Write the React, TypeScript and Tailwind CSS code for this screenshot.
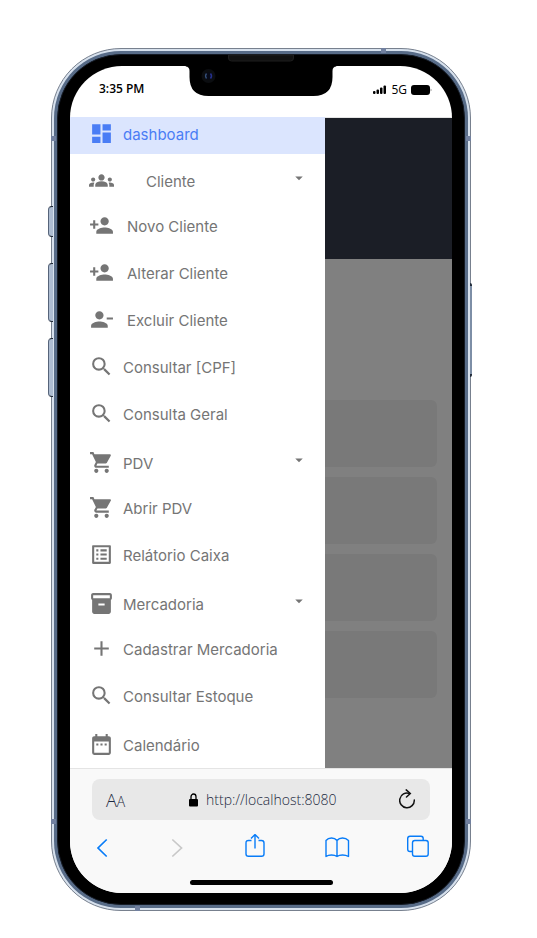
import type { ReactNode } from "react";
import type { IconType } from "react-icons";
import {
  MdAdd,
  MdArrowDropDown,
  MdDashboard,
  MdDateRange,
  MdGroups,
  MdInventory2,
  MdListAlt,
  MdPersonAdd,
  MdPersonRemove,
  MdSearch,
  MdShoppingCart,
} from "react-icons/md";

type Entry = { label: string; icon: IconType; kind?: "group" | "section"; gap?: string };

const entries: Entry[] = [
  { label: "Cliente", icon: MdGroups, kind: "group", gap: "gap-8" },
  { label: "Novo Cliente", icon: MdPersonAdd, gap: "gap-[13px]" },
  { label: "Alterar Cliente", icon: MdPersonAdd, gap: "gap-[13px]" },
  { label: "Excluir Cliente", icon: MdPersonRemove, gap: "gap-[13px]" },
  { label: "Consultar [CPF]", icon: MdSearch },
  { label: "Consulta Geral", icon: MdSearch },
  { label: "PDV", icon: MdShoppingCart, kind: "group" },
  { label: "Abrir PDV", icon: MdShoppingCart },
  { label: "Relátorio Caixa", icon: MdListAlt },
  { label: "Mercadoria", icon: MdInventory2, kind: "group" },
  { label: "Cadastrar Mercadoria", icon: MdAdd },
  { label: "Consultar Estoque", icon: MdSearch },
  { label: "Calendário", icon: MdDateRange, kind: "section" },
];

function MenuRow({ label, icon: Icon, kind, gap = "gap-[9px]" }: Entry) {
  const cls = `flex h-[47px] w-full items-center pl-[19px] text-left ${gap} ${kind ? "pt-1" : ""}`;
  const body = (
    <>
      <Icon className="size-[25px] shrink-0" />
      <span className="flex-1 whitespace-nowrap pt-0.5">{label}</span>
    </>
  );
  if (kind === "group") {
    return (
      <button type="button" className={cls} aria-expanded="true">
        {body}
        <MdArrowDropDown className="mb-1.5 mr-[17px] size-[18px] shrink-0" />
      </button>
    );
  }
  return (
    <a href="#" className={cls}>
      {body}
    </a>
  );
}

function Notch() {
  return (
    <svg
      className="absolute -top-px left-1/2 -translate-x-1/2"
      width="151"
      height="43"
      viewBox="0 0 151 43"
      aria-hidden="true"
    >
      <path
        d="M0 11H151V12.500Q147 12.500 147 17V23Q147 42 128 42H23Q4 42 4 23V17Q4 12.500 0 12.500Z"
        fill="#000"
      />
      <path d="M43 1H108V4Q108 7 105 7H46Q43 7 43 4Z" fill="#111" stroke="#1e1e1e" strokeWidth="1" />
      <circle cx="23" cy="22" r="7" fill="#0b0d10" />
      <circle cx="23" cy="22" r="3.600" fill="#070a18" />
      <path d="M21 19.500Q19 22 21 24.500" stroke="#35507a" strokeWidth="1.300" fill="none" />
      <path d="M25 19.500Q27 22 25 24.500" stroke="#26318c" strokeWidth="1.500" fill="none" />
    </svg>
  );
}

function StatusBar() {
  return (
    <div className="flex h-[51px] items-start justify-between pl-[29px] pr-5 pt-[13px] font-['Open_Sans','Noto_Sans',sans-serif] text-xs leading-5 text-black">
      <span className="font-semibold">3:35 PM</span>
      <span className="flex items-center gap-1 pt-px font-medium">
        <svg width="14" height="10" viewBox="0 0 14 10" aria-hidden="true">
          <rect x="0" y="6" width="2.500" height="3" rx="1" />
          <rect x="3.500" y="4.500" width="2.500" height="4.500" rx="1" />
          <rect x="7" y="2.500" width="2.500" height="6.500" rx="1" />
          <rect x="10.500" y="0.500" width="2.500" height="8.500" rx="1" />
        </svg>
        5G
        <svg width="21" height="10" viewBox="0 0 21 10" aria-hidden="true">
          <rect x="0" y="0" width="19" height="10" rx="3" />
          <path d="M19.800 3.500Q21 5 19.800 6.500Z" />
        </svg>
      </span>
    </div>
  );
}

function Tool({ label, className, children }: { label: string; className: string; children: ReactNode }) {
  return (
    <button type="button" aria-label={label} className={className}>
      {children}
    </button>
  );
}

function BrowserBar() {
  return (
    <footer className="border-t border-[#e4e4e4] bg-[#f9f9f9] pb-2 pt-2.5">
      <div className="mx-[22px] flex h-[41px] items-center rounded-lg bg-[#e8e8e8] pl-3.5 pr-[15px] font-['Open_Sans','Noto_Sans',sans-serif] text-[#1c2840]">
        <button type="button" aria-label="Text size" className="w-[83px] text-left leading-6">
          <span className="text-lg font-light">A</span>
          <span className="text-sm font-light">A</span>
        </button>
        <svg width="9" height="14" viewBox="0 0 9 14" aria-hidden="true">
          <path d="M2 6V3.800A2.500 2.800 0 0 1 7 3.800V6" fill="none" stroke="#000" strokeWidth="1.300" />
          <rect x="0" y="6" width="9" height="7.500" rx="1" fill="#000" />
        </svg>
        <input
          type="text"
          aria-label="Address"
          defaultValue="http://localhost:8080"
          className="ml-2 min-w-0 flex-1 bg-transparent text-sm font-light leading-6 outline-none"
        />
        <Tool label="Reload" className="w-4">
          <svg width="17" height="22" viewBox="0 0 17 22" fill="none" stroke="#111" strokeWidth="1.500" aria-hidden="true">
            <path d="M10.500 4.500A7.300 7.300 0 1 0 15.300 11" strokeLinecap="round" />
            <path d="M7.200 0.900L11.300 4.500L7.500 8" strokeLinecap="round" />
          </svg>
        </Tool>
      </div>
      <nav aria-label="Browser" className="mt-3.5 flex h-7 items-center justify-between pl-6 pr-[23px] text-[#087cf8]">
        <Tool label="Back" className="w-4">
          <svg width="16" height="28" viewBox="0 0 16 28" fill="none" stroke="currentColor" strokeWidth="1.700" aria-hidden="true">
            <path d="M12.700 5.500L4 14L12.700 22.500" />
          </svg>
        </Tool>
        <Tool label="Forward" className="w-5 text-[#c8c8c8]">
          <svg width="20" height="28" viewBox="0 0 20 28" fill="none" stroke="currentColor" strokeWidth="1.700" aria-hidden="true">
            <path d="M6.300 5.500L15.500 14L6.300 22.500" />
          </svg>
        </Tool>
        <Tool label="Share" className="w-6">
          <svg width="24" height="28" viewBox="0 0 24 28" fill="none" stroke="currentColor" strokeWidth="1.400" aria-hidden="true">
            <path d="M8.500 6.500H5.500Q3 6.500 3 9V20Q3 22.300 5.500 22.300H18.500Q21 22.300 21 20V9Q21 6.500 18.500 6.500H15.500" />
            <path d="M12 14.500V0.500M8 4.500L12 0.500L16 4.500" />
          </svg>
        </Tool>
        <Tool label="Bookmarks" className="w-7">
          <svg width="28" height="28" viewBox="0 0 28 28" fill="none" stroke="currentColor" strokeWidth="1.400" strokeLinejoin="round" aria-hidden="true">
            <path d="M14 6.500Q12 4 8.500 4T3 6.500V22.500Q5 21 8.500 21T14 22.500Q16 21 19.500 21T25.500 22.500V6.500Q23 4 19.500 4T14 6.500V22.500" />
          </svg>
        </Tool>
        <Tool label="Tabs" className="w-[22px]">
          <svg width="22" height="28" viewBox="0 0 22 28" fill="none" stroke="currentColor" strokeWidth="1.400" aria-hidden="true">
            <path d="M5.500 17.500H3Q0.700 17.500 0.700 15.300V4.500Q0.700 2.200 3 2.200H14Q16.200 2.200 16.200 4.500V6.500" />
            <rect x="5.500" y="6.500" width="15.700" height="15.700" rx="2.300" />
          </svg>
        </Tool>
      </nav>
      <div className="mx-auto mt-[18px] h-[5px] w-[143px] rounded-full bg-black" />
    </footer>
  );
}

function SideKey({ className }: { className: string }) {
  return (
    <span
      className={`absolute -left-1 w-[5px] rounded-l-sm border border-r-0 border-[#56647a] border-y-[#1d2633] bg-[#aebdd2] ${className}`}
    />
  );
}

export default function App() {
  return (
    <div className="min-h-screen bg-white pb-[27px] pl-[51px] pr-[66px] pt-12">
      <div className="relative rounded-[70px] border border-[#77808e] bg-[#d7e1ed] p-0.5">
        <SideKey className="top-[157px] h-[31px]" />
        <SideKey className="top-[214px] h-[59px]" />
        <SideKey className="top-[289px] h-[59px]" />
        <span className="absolute -right-0.5 top-[234px] h-[94px] w-0.5 rounded-r-sm border-y-[3px] border-[#232d3b] bg-[#7d8ea6]" />
        <span className="absolute -left-px top-[87px] h-[5px] w-[5px] bg-[#7281a0]" />
        <span className="absolute -right-px top-[87px] h-[5px] w-[5px] bg-[#7281a0]" />
        <span className="absolute -left-px bottom-[86px] h-[5px] w-[5px] bg-[#7281a0]" />
        <span className="absolute -right-px bottom-[86px] h-[5px] w-[5px] bg-[#7281a0]" />
        <span className="absolute -top-px right-[84px] h-[5px] w-[5px] bg-[#7281a0]" />
        <span className="absolute -bottom-px left-[83px] h-[5px] w-[5px] bg-[#7281a0]" />
        <div className="rounded-[67px] bg-[#586c88] p-[3px]">
          <div className="relative rounded-[64px] border border-[#141a24] bg-black px-3 py-[11px]">
            <div className="overflow-hidden rounded-[52px] bg-white">
              <StatusBar />
              <div className="flex">
                <aside className="w-[255px] shrink-0 bg-white font-[Inter,sans-serif] text-[15px] leading-5 text-[#757575]">
                  <nav aria-label="Menu" className="flex flex-col pb-0.5">
                    <a
                      href="#"
                      aria-current="page"
                      className="mb-px flex h-[37px] items-center gap-[9px] bg-[#dbe5fe] pb-1 pl-[19px] text-[#4a7df5]"
                    >
                      <MdDashboard className="size-[25px] shrink-0" />
                      <span className="pt-0.5">dashboard</span>
                    </a>
                    {entries.map((entry) => (
                      <MenuRow key={entry.label} {...entry} />
                    ))}
                  </nav>
                </aside>
                <main className="flex flex-1 flex-col border-t border-[#e4e4e4] bg-[#808080]">
                  <header className="h-[141px] bg-[#1b1e26]" />
                  <div className="flex flex-col gap-2.5 pr-[15px] pt-[141px]">
                    <section className="h-[67px] rounded-r-md bg-[#797979]" />
                    <section className="h-[67px] rounded-r-md bg-[#797979]" />
                    <section className="h-[67px] rounded-r-md bg-[#797979]" />
                    <section className="h-[67px] rounded-r-md bg-[#797979]" />
                  </div>
                </main>
              </div>
              <BrowserBar />
            </div>
            <Notch />
          </div>
        </div>
      </div>
    </div>
  );
}
